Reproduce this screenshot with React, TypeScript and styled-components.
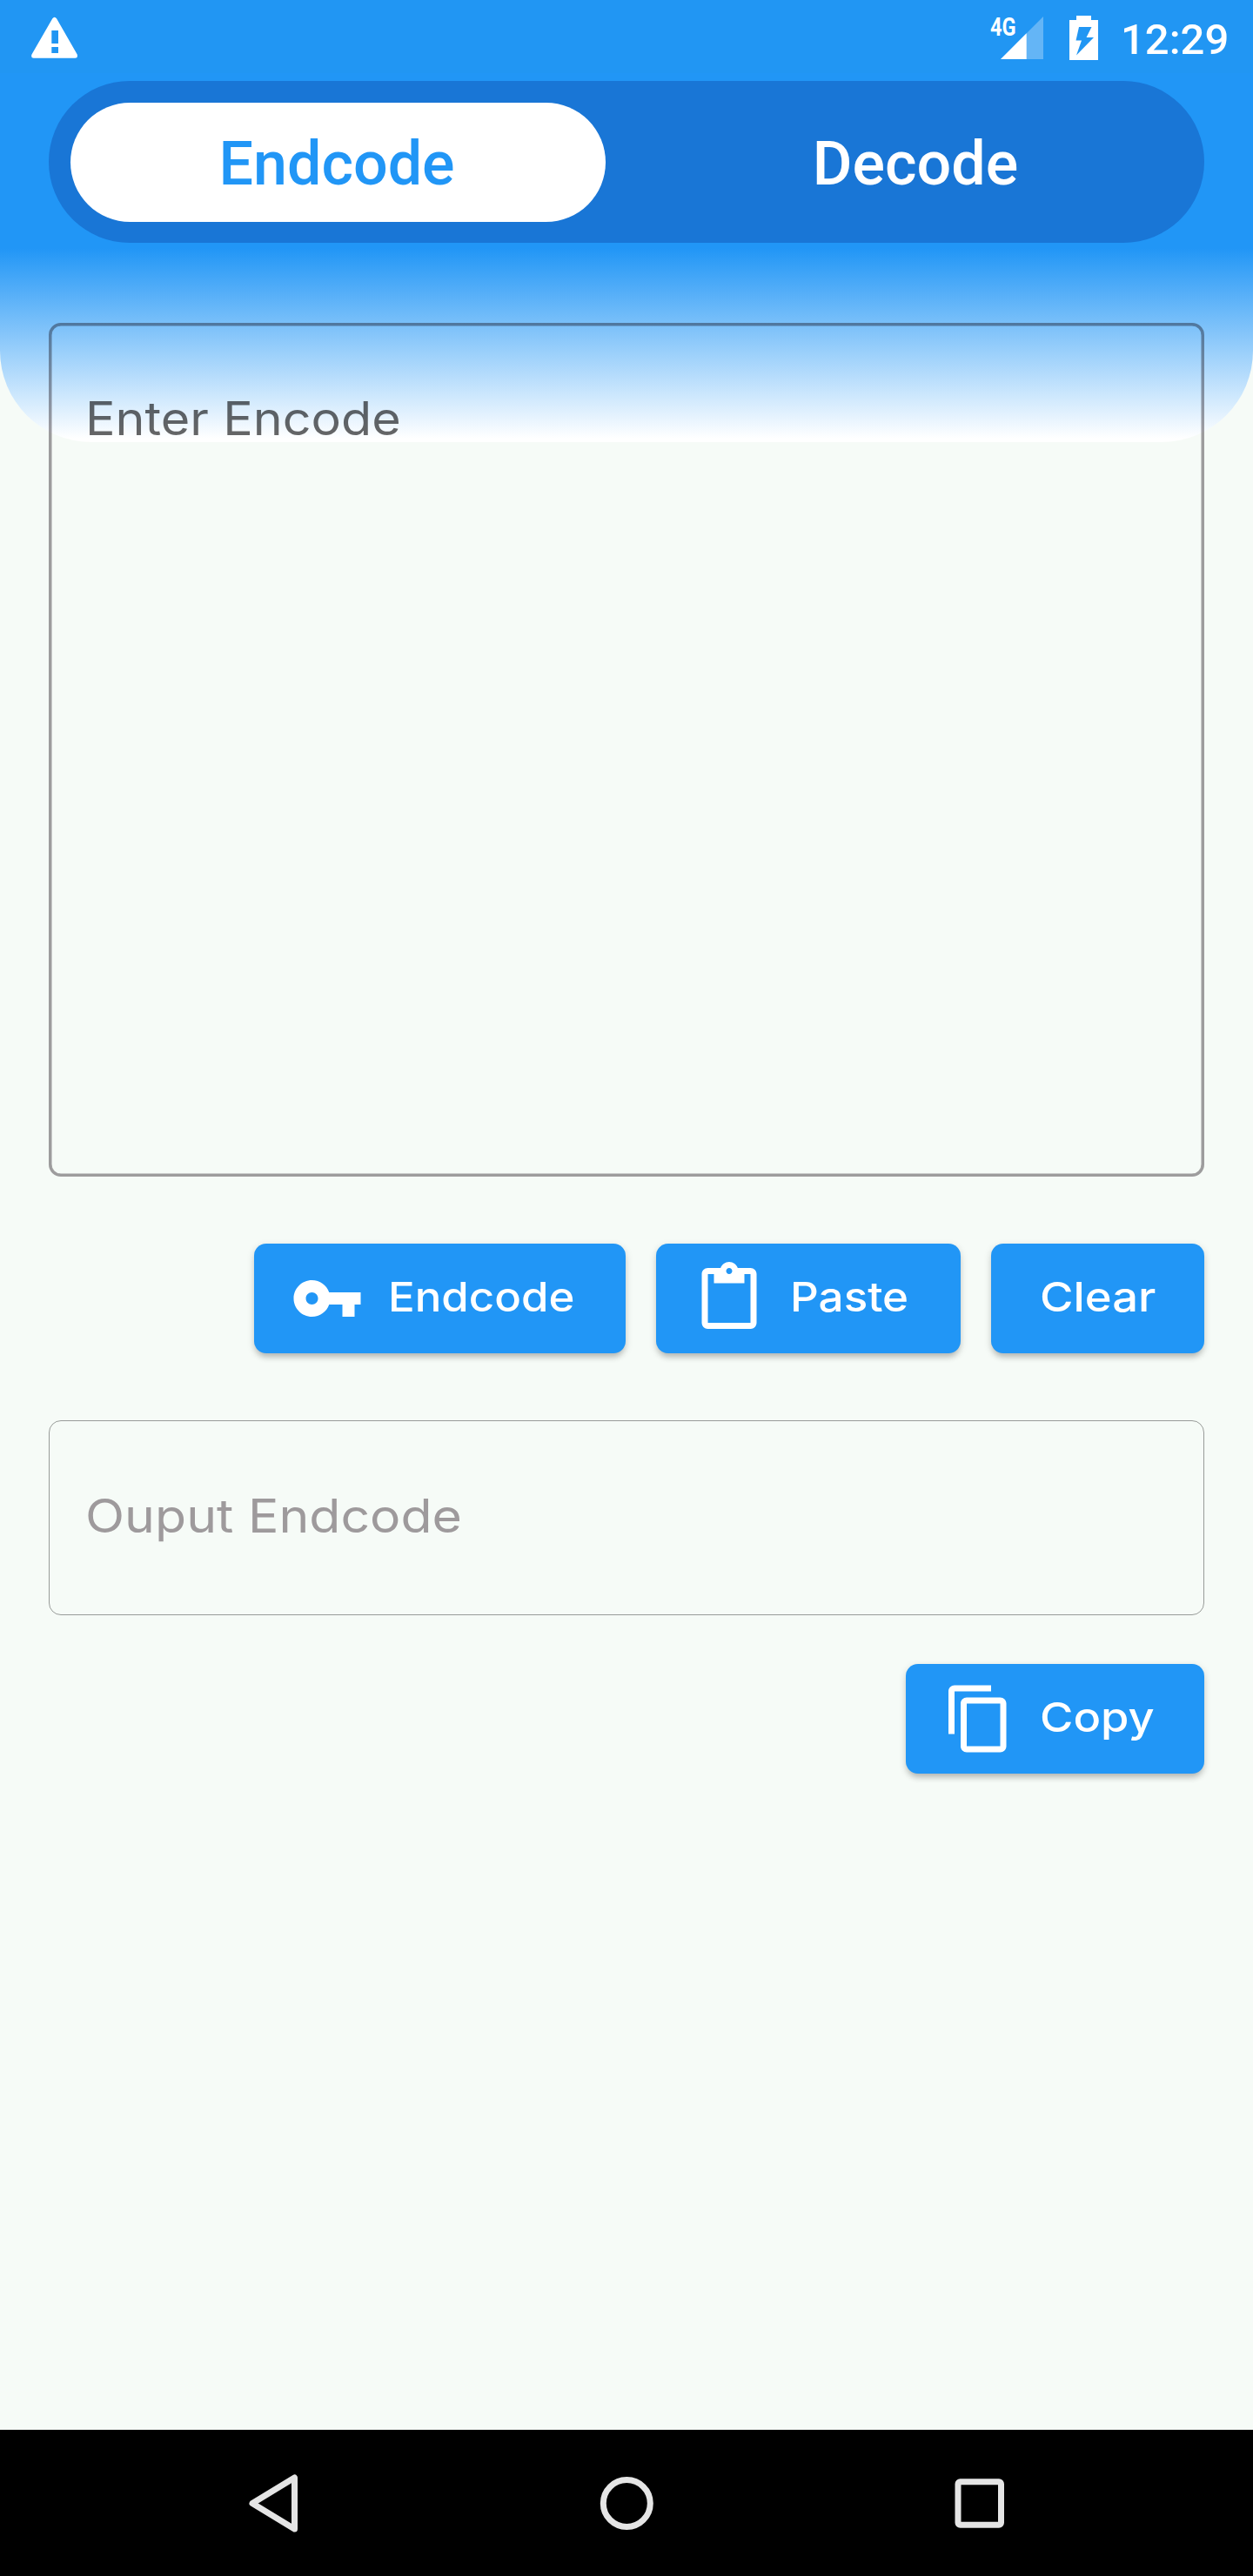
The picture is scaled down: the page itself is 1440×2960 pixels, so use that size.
import React, { useState } from "react";
import styled, { createGlobalStyle } from "styled-components";

const GlobalStyle = createGlobalStyle`
  * { box-sizing: border-box; }
  body { margin: 0; background: #f6fbf7; }
`;

const Screen = styled.div`
  width: 1440px;
  height: 2960px;
  display: flex;
  flex-direction: column;
  overflow: hidden;
  background: #f6fbf7;
  font-family: Inter, "Open Sans", sans-serif;
`;

const Content = styled.div`
  position: relative;
  flex: 1;
  display: flex;
  flex-direction: column;
`;

/* Tinted sheet that the header and the top of the form lie on */
const Backdrop = styled.div`
  position: absolute;
  inset: 0 0 auto 0;
  height: 508px;
  border-radius: 0 0 105px 105px;
  background: linear-gradient(#2196f6 0, #2196f6 285px, #ffffff 504px);
`;

const StatusBar = styled.header`
  position: relative;
  height: 84px;
  padding: 0 28px 0 36px;
  display: flex;
  justify-content: space-between;
  align-items: flex-start;
  background: #2196f3;
  color: #fff;
  font-family: Roboto, sans-serif;
`;

const StatusIcon = styled.svg<{ $top: number; $left?: number }>`
  display: block;
  margin-top: ${(p) => p.$top}px;
  margin-left: ${(p) => p.$left ?? 0}px;
`;

const StatusGroup = styled.div`
  display: flex;
  align-items: flex-start;
`;

const Network = styled.span`
  width: 12px;
  margin-top: 15px;
  font-size: 29.5px;
  line-height: 32px;
  font-weight: 700;
  white-space: nowrap;

  span {
    display: inline-block;
    transform: scaleX(0.8);
    transform-origin: 0 0;
  }
`;

const Clock = styled.time`
  width: 124px;
  margin-left: 26px;
  margin-top: 17px;
  font-size: 49px;
  line-height: 58px;
  font-weight: 500;
`;

const Tabs = styled.nav`
  position: relative;
  margin: 9px 56px 0;
  height: 186px;
  padding: 24.5px;
  border-radius: 93px;
  background: #1976d6;
  display: flex;
  justify-content: space-between;
`;

const Tab = styled.button<{ $active: boolean }>`
  width: 615px;
  height: 137px;
  padding: 4px 0 0;
  border: 0;
  border-radius: 69px;
  background: ${(p) => (p.$active ? "#ffffff" : "transparent")};
  color: ${(p) => (p.$active ? "#2196f6" : "#ffffff")};
  font: 500 70px/82px Roboto, sans-serif;

  &:first-child {
    padding-right: 2px;
  }
`;

const Form = styled.main`
  position: relative;
  margin: 92px 56px 0;
  display: flex;
  flex-direction: column;
`;

const InputBox = styled.div`
  height: 981px;
  padding: 72px 39px 0;
  border: 3px solid rgba(12, 2, 10, 0.38);
  box-shadow: inset 0 0 0 0.5px rgba(12, 2, 10, 0.38);
  border-radius: 14px;
`;

const OutputBox = styled.div`
  height: 224.5px;
  margin-top: 77px;
  padding: 74px 41px 0;
  border: 1px solid rgba(0, 0, 0, 0.38);
  border-radius: 14px;
`;

const Hint = styled.span<{ $color: string; $stretch: number }>`
  display: block;
  width: max-content;
  font-size: 53.6px;
  line-height: 70px;
  color: ${(p) => p.$color};
  white-space: nowrap;
  transform: scaleX(${(p) => p.$stretch});
  transform-origin: 0 0;
`;

const Actions = styled.div<{ $top: number }>`
  margin-top: ${(p) => p.$top}px;
  display: flex;
  justify-content: flex-end;
  gap: 35px;
`;

const Button = styled.button<{ $width: number; $icon?: boolean }>`
  width: ${(p) => p.$width}px;
  height: 126px;
  padding: 0 0 0 ${(p) => (p.$icon ? 42 : 56)}px;
  border: 0;
  border-radius: 14px;
  background: #2196f6;
  box-shadow: 0 7px 7px -3px rgba(0, 0, 0, 0.16), 0 3px 9px rgba(0, 0, 0, 0.17);
  color: #fff;
  display: flex;
  align-items: center;
  gap: 28px;
`;

const Label = styled.span<{ $stretch: number }>`
  font: 500 46.8px/60px Inter, sans-serif;
  white-space: nowrap;
  margin-top: -3px;
  transform: scaleX(${(p) => p.$stretch});
  transform-origin: 0 0;
`;

const Glyph = styled.svg`
  width: 84px;
  height: 84px;
  flex: none;
  fill: currentColor;
`;

const NavBar = styled.footer`
  height: 168px;
  background: #000;
  display: flex;
  justify-content: center;
  align-items: center;
  gap: 321px;
`;

const NavIcon = styled.svg`
  width: 84px;
  height: 84px;
  fill: none;
  stroke: #e5e5e5;
  stroke-width: 7;
  stroke-linejoin: round;
`;

const PATHS = {
  key: "M12.65 10C11.83 7.67 9.61 6 7 6c-3.31 0-6 2.69-6 6s2.69 6 6 6c2.61 0 4.83-1.67 5.65-4H17v4h4v-4h2v-4H12.65zM7 14c-1.1 0-2-.9-2-2s.9-2 2-2 2 .9 2 2-.9 2-2 2z",
  paste:
    "M19 2h-4.18C14.4.84 13.3 0 12 0c-1.3 0-2.4.84-2.82 2H5c-1.1 0-2 .9-2 2v16c0 1.1.9 2 2 2h14c1.1 0 2-.9 2-2V4c0-1.1-.9-2-2-2zm-7 0c.55 0 1 .45 1 1s-.45 1-1 1-1-.45-1-1 .45-1 1-1zm7 18H5V4h2v3h10V4h2v16z",
  copy: "M16 1H4c-1.1 0-2 .9-2 2v14h2V3h12V1zm3 4H8c-1.1 0-2 .9-2 2v14c0 1.1.9 2 2 2h11c1.1 0 2-.9 2-2V7c0-1.1-.9-2-2-2zm0 16H8V7h11v14z",
};

function Icon({ name }: { name: keyof typeof PATHS }) {
  return (
    <Glyph viewBox="0 0 24 24">
      <path d={PATHS[name]} />
    </Glyph>
  );
}

export default function App() {
  const [tab, setTab] = useState<"encode" | "decode">("encode");

  return (
    <>
      <GlobalStyle />
      <Screen>
        <Content>
          <Backdrop />
          <StatusBar>
            <StatusIcon $top={19} width="54" height="49" viewBox="0 0 54 49" fill="#fff">
              <path
                fillRule="evenodd"
                d="M24.3 2.2Q26.6-.8 29 2.2L52.7 43.4Q53.8 47.6 50.2 47.7H2.6Q-.9 47.4.5 43.4ZM23.3 16V31H31V16ZM23.3 35V42H31V35Z"
              />
            </StatusIcon>
            <StatusGroup>
              <Network>
                <span>4G</span>
              </Network>
              <StatusIcon $top={19} width="49" height="49" viewBox="0 0 49 49" fill="#fff">
                <path d="M0 49L49 0V49Z" opacity=".3" />
                <path d="M0 49L29.7 19.3V49Z" />
              </StatusIcon>
              <StatusIcon
                $top={18}
                $left={30}
                width="33"
                height="51"
                viewBox="0 0 33 51"
                fill="#fff"
              >
                <path
                  fillRule="evenodd"
                  d="M8 0H25V5H33V51H0V5H8ZM11 13L7.5 28.5H14L8 45.5L28 25H19.5L25.5 13Z"
                />
              </StatusIcon>
              <Clock>12:29</Clock>
            </StatusGroup>
          </StatusBar>

          <Tabs>
            <Tab $active={tab === "encode"} onClick={() => setTab("encode")}>
              Endcode
            </Tab>
            <Tab $active={tab === "decode"} onClick={() => setTab("decode")}>
              Decode
            </Tab>
          </Tabs>

          <Form>
            <InputBox>
              <Hint $color="rgba(0, 0, 0, 0.6)" $stretch={1.073}>
                Enter Encode
              </Hint>
            </InputBox>

            <Actions $top={76.5}>
              <Button $width={427} $icon>
                <Icon name="key" />
                <Label $stretch={1.088}>Endcode</Label>
              </Button>
              <Button $width={350} $icon>
                <Icon name="paste" />
                <Label $stretch={1.093}>Paste</Label>
              </Button>
              <Button $width={245}>
                <Label $stretch={1.123}>Clear</Label>
              </Button>
            </Actions>

            <OutputBox>
              <Hint $color="#9e9a9c" $stretch={1.101}>
                Ouput Endcode
              </Hint>
            </OutputBox>

            <Actions $top={55.5}>
              <Button $width={343} $icon>
                <Icon name="copy" />
                <Label $stretch={1.12}>Copy</Label>
              </Button>
            </Actions>
          </Form>
        </Content>

        <NavBar>
          <NavIcon viewBox="0 0 84 84">
            <path d="M17 42.5L65.5 13V72Z" />
          </NavIcon>
          <NavIcon viewBox="0 0 84 84">
            <circle cx="42.3" cy="42.5" r="27" />
          </NavIcon>
          <NavIcon viewBox="0 0 84 84">
            <rect x="18" y="17.7" width="49.5" height="49.5" rx="2.5" />
          </NavIcon>
        </NavBar>
      </Screen>
    </>
  );
}
